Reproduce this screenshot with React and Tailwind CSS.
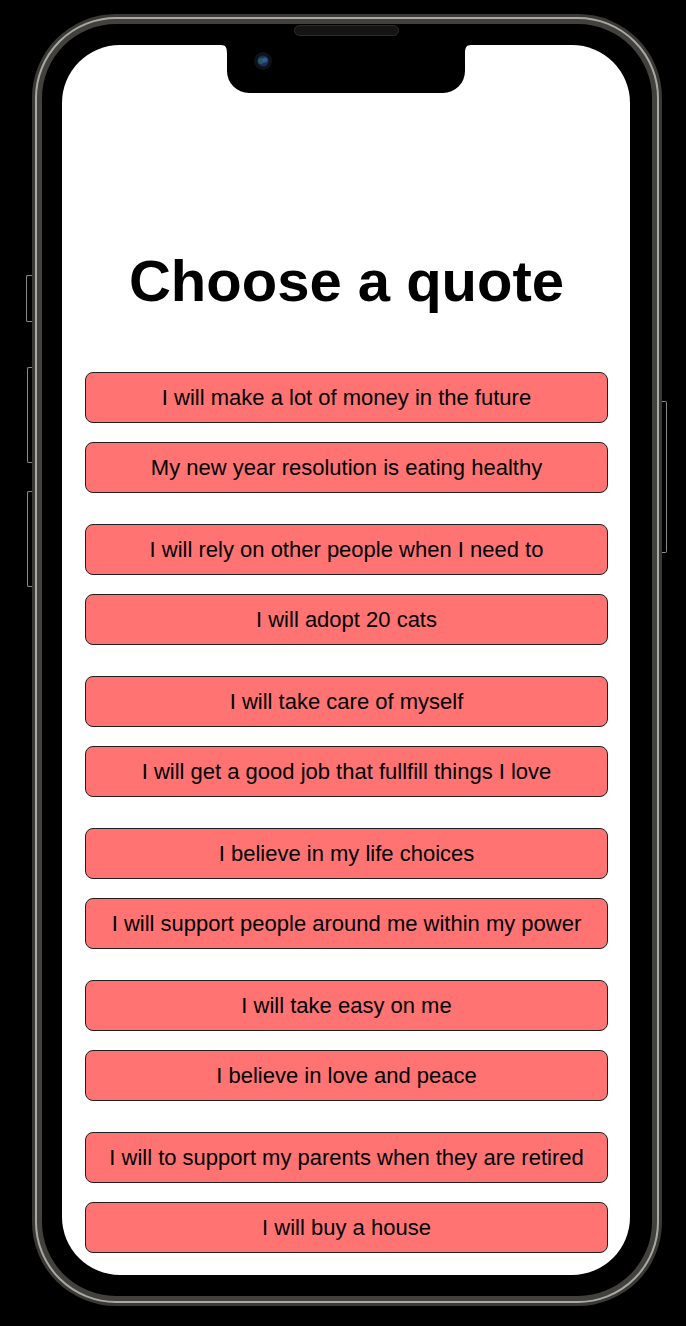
import React from 'react';

const quotes = [
  ['I will make a lot of money in the future', 'My new year resolution is eating healthy'],
  ['I will rely on other people when I need to', 'I will adopt 20 cats'],
  ['I will take care of myself', 'I will get a good job that fullfill things I love'],
  ['I believe in my life choices', 'I will support people around me within my power'],
  ['I will take easy on me', 'I believe in love and peace'],
  ['I will to support my parents when they are retired', 'I will buy a house'],
];

const QuoteButton = ({ text }) => (
  <button className="h-[51px] w-full rounded-[8px] border border-[#1f1f1f] bg-[#ff7373] text-[22px] leading-none text-black">
    {text}
  </button>
);

const App = () => {
  return (
    <div
      className="h-[1326px] w-[686px] overflow-hidden bg-black pl-[32px] pt-[14px]"
      style={{ fontFamily: '"Liberation Sans", Arial, sans-serif' }}
    >
      <div className="relative h-[1292px] w-[630px]">
        {/* side buttons */}
        <div className="absolute left-[-6px] top-[261px] h-[47px] w-[6px] rounded-l-[2px] border border-r-0 border-[#8a8a86] bg-black" />
        <div className="absolute left-[-5px] top-[353px] h-[96px] w-[5px] rounded-l-[2px] border border-r-0 border-[#8a8a86] bg-black" />
        <div className="absolute left-[-5px] top-[477px] h-[96px] w-[5px] rounded-l-[2px] border border-r-0 border-[#8a8a86] bg-black" />
        <div className="absolute right-[-5px] top-[387px] h-[152px] w-[5px] rounded-r-[2px] border border-l-0 border-[#8a8a86] bg-black" />

        {/* frame */}
        <div className="h-full w-full rounded-[84px] bg-[#3a3935] p-[3px]">
          <div className="h-full w-full rounded-[81px] border-[2px] border-[#a9a9a4] bg-[#42413d] p-[5px]">
            <div className="relative h-full w-full rounded-[74px] bg-black pb-[21px] pl-[20px] pr-[22px] pt-[21px]">
              {/* speaker */}
              <div className="absolute left-[252px] top-[1px] h-[11px] w-[105px] rounded-full border border-[#2c2c2c] bg-[#141414]" />

              {/* screen */}
              <div className="relative h-full w-full overflow-hidden rounded-[58px] bg-white">
                {/* notch */}
                <svg className="absolute left-[159px] top-0" width="250" height="48" viewBox="0 0 250 48">
                  <path d="M0 0 H250 C245 0 244 3 244 9 V26 A22 22 0 0 1 222 48 H28 A22 22 0 0 1 6 26 V9 C6 3 5 0 0 0 Z" fill="#000" />
                  <circle cx="42" cy="16" r="9" fill="#0e1116" />
                  <circle cx="42" cy="16" r="5.5" fill="#1d2f55" />
                  <circle cx="40" cy="16" r="3" fill="#2a6a6a" opacity="0.7" />
                  <circle cx="44" cy="15" r="2.5" fill="#3a5fb0" opacity="0.8" />
                </svg>

                <div className="flex flex-col items-center pl-[23px] pr-[22px] pt-[207px]">
                  <h1 className="text-[58px] font-bold leading-none text-black">Choose a quote</h1>
                  <div className="mt-[62px] flex w-full flex-col gap-[31px]">
                    {quotes.map((pair, i) => (
                      <div key={i} className="flex flex-col gap-[19px]">
                        {pair.map((q) => (
                          <QuoteButton key={q} text={q} />
                        ))}
                      </div>
                    ))}
                  </div>
                </div>
              </div>
            </div>
          </div>
        </div>
      </div>
    </div>
  );
};

export default App;
